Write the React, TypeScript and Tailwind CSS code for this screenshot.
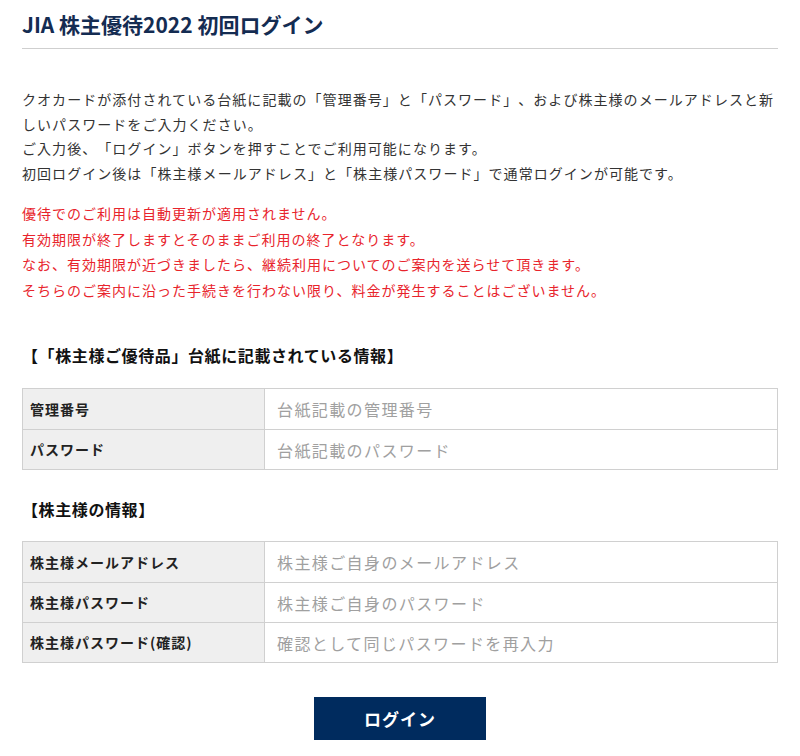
const font = { fontFamily: '"Noto Sans CJK JP", "Noto Sans", sans-serif' }

type Field = { label: string; placeholder: string; type?: string }

const cardFields: Field[] = [
  { label: '管理番号', placeholder: '台紙記載の管理番号' },
  { label: 'パスワード', placeholder: '台紙記載のパスワード', type: 'password' },
]

const userFields: Field[] = [
  { label: '株主様メールアドレス', placeholder: '株主様ご自身のメールアドレス', type: 'email' },
  { label: '株主様パスワード', placeholder: '株主様ご自身のパスワード', type: 'password' },
  { label: '株主様パスワード(確認)', placeholder: '確認として同じパスワードを再入力', type: 'password' },
]

function FieldTable({ fields }: { fields: Field[] }) {
  return (
    <div className="border border-[#d0d0d0]">
      {fields.map((f, i) => (
        <div
          key={f.label}
          className={`flex h-[40px] ${i > 0 ? 'border-t border-[#d0d0d0]' : ''}`}
        >
          <div className="flex w-[242px] items-center border-r border-[#d0d0d0] bg-[#efefef] pl-[7px] text-[14px] font-bold tracking-[1px] text-[#222]">
            {f.label}
          </div>
          <input
            type={f.type ?? 'text'}
            placeholder={f.placeholder}
            className="min-w-0 flex-1 bg-white pl-[12px] text-[16px] tracking-[1.4px] text-[#333] outline-none placeholder:text-[#a0a0a0]"
          />
        </div>
      ))}
    </div>
  )
}

export default function App() {
  return (
    <div className="bg-white px-[22px] text-[#333] [text-spacing-trim:space-all]" style={font}>
      <h1 className="border-b border-[#cfcfcf] pt-[10px] pb-[10px] text-[21px] leading-[28px] font-bold text-[#142c52]">
        JIA 株主優待2022 初回ログイン
      </h1>

      <p className="mt-[38px] text-[14px] leading-[24.5px] tracking-[1.05px]">
        クオカードが添付されている台紙に記載の「管理番号」と「パスワード」、および株主様のメールアドレスと新しいパスワードをご入力ください。
        <br />
        ご入力後、「ログイン」ボタンを押すことでご利用可能になります。
        <br />
        初回ログイン後は「株主様メールアドレス」と「株主様パスワード」で通常ログインが可能です。
      </p>

      <p className="mt-[16px] text-[14px] leading-[25.5px] tracking-[1px] text-[#e8242c]">
        優待でのご利用は自動更新が適用されません。
        <br />
        有効期限が終了しますとそのままご利用の終了となります。
        <br />
        なお、有効期限が近づきましたら、継続利用についてのご案内を送らせて頂きます。
        <br />
        そちらのご案内に沿った手続きを行わない限り、料金が発生することはございません。
      </p>

      <h2 className="mt-[40px] text-[16px] leading-[24px] font-bold tracking-[0.6px] text-[#111]">
        【「株主様ご優待品」台紙に記載されている情報】
      </h2>
      <div className="mt-[21px]">
        <FieldTable fields={cardFields} />
      </div>

      <h2 className="mt-[27px] text-[16px] leading-[24px] font-bold tracking-[0.6px] text-[#111]">
        【株主様の情報】
      </h2>
      <div className="mt-[20px]">
        <FieldTable fields={userFields} />
      </div>

      <div className="flex justify-center pt-[34px] pb-[16px]">
        <button
          type="submit"
          className="h-[43px] w-[172px] bg-[#002b5e] text-[17px] font-bold tracking-[1px] text-white"
        >
          ログイン
        </button>
      </div>
    </div>
  )
}
